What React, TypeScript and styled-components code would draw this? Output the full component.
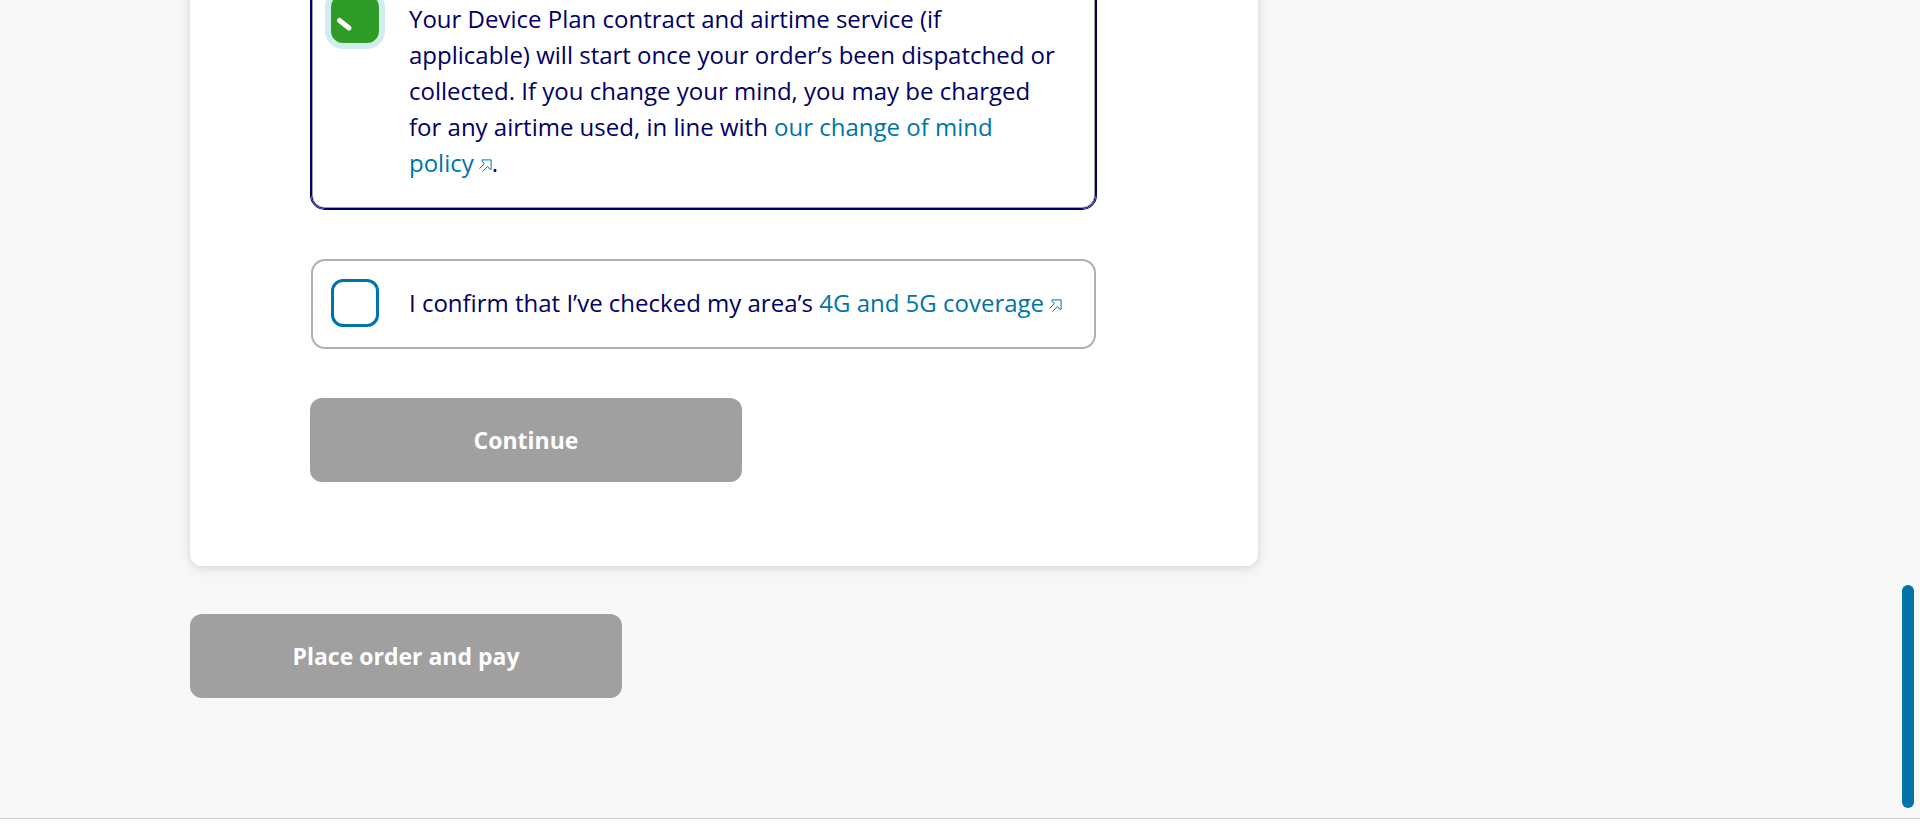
import React, { useState } from 'react';
import styled, { createGlobalStyle, css } from 'styled-components';

const colors = {
  navy: '#000066',
  link: '#0074a9',
  green: '#2f9c28',
  halo: '#d1eeef',
  grey: '#a0a0a0',
  page: '#f8f8f8',
  line: '#cccccc',
};

const GlobalStyle = createGlobalStyle`
  *, *::before, *::after { box-sizing: border-box; }
  body {
    margin: 0;
    background: #ffffff;
    color: ${colors.navy};
    font-family: "Open Sans", "Noto Sans", sans-serif;
    font-size: 24px;
    line-height: 36px;
  }
`;

const Viewport = styled.div`
  position: relative;
  min-height: 100vh;
  overflow: hidden;
`;

const Page = styled.main`
  background: ${colors.page};
  border-bottom: 1px solid ${colors.line};
  padding: 0 24px 120px;
`;

const Container = styled.div`
  max-width: 1540px;
  margin: 0 auto;
`;

const Column = styled.div`
  max-width: 1068px;
  display: flex;
  flex-direction: column;
  align-items: flex-start;
  gap: 48px;
`;

const Card = styled.form`
  width: 100%;
  margin-top: -109px;
  padding: 84px 161px 84px 120px;
  background: #ffffff;
  border-radius: 12px;
  box-shadow: 0 2px 8px rgba(0, 0, 0, 0.12), 0 4px 24px rgba(0, 0, 0, 0.04);
  display: flex;
  flex-direction: column;
  align-items: flex-start;
`;

const Options = styled.div`
  width: 100%;
  display: flex;
  flex-direction: column;
  gap: 50px;
  margin-bottom: 49px;
  padding: 0 1px;
`;

const Option = styled.div<{ $checked: boolean }>`
  display: grid;
  grid-template-columns: 48px 1fr;
  column-gap: 30px;
  padding: 24px 29px 26px 18px;
  border: 2px solid #b0b0b0;
  border-radius: 14px;
  ${p =>
    p.$checked &&
    css`
      border: 1px solid ${colors.navy};
      padding: 25px 30px 27px 19px;
      box-shadow: 0 0 0 1px ${colors.navy}, inset 0 0 0 1px ${colors.grey};
    `}
`;

const Tick = styled.span`
  display: grid;
  align-self: start;
  margin: -6px 0;

  > * {
    grid-area: 1 / 1;
  }
`;

const Checkbox = styled.input`
  appearance: none;
  width: 48px;
  height: 48px;
  margin: 0;
  border: 3px solid ${colors.link};
  border-radius: 12px;
  background: #ffffff;
  cursor: pointer;

  &:checked {
    border-color: ${colors.green};
    background: ${colors.green};
    box-shadow: 0 0 0 6px ${colors.halo};
  }
`;

const TickMark = styled.svg`
  width: 48px;
  height: 48px;
  pointer-events: none;
`;

const Link = styled.a`
  color: ${colors.link};
  text-decoration: none;
`;

const NoWrap = styled.span`
  white-space: nowrap;
`;

const Arrow = styled.svg`
  width: 13px;
  height: 13px;
  margin-left: 5px;
`;

const Button = styled.button`
  width: 432px;
  max-width: 100%;
  height: 84px;
  border: 0;
  border-radius: 12px;
  background: ${colors.grey};
  color: #ffffff;
  font: inherit;
  font-size: 23px;
  font-weight: 700;
`;

const ScrollThumb = styled.div`
  position: absolute;
  right: 6px;
  bottom: 31px;
  width: 12px;
  height: 223px;
  border-radius: 6px;
  background: ${colors.link};
`;

function ExternalArrow() {
  return (
    <Arrow viewBox="0 0 13 13" fill="none" stroke={colors.link} strokeWidth="1" aria-hidden="true">
      <path d="M0.5 9.5 L5.5 4.5 L3 2.5 L3 0.9 H12.1 V10.3 H10.8 L8.6 7.5 L3.6 12.5" />
    </Arrow>
  );
}

type ConfirmProps = { id: string; initial: boolean; children: React.ReactNode };

function Confirm({ id, initial, children }: ConfirmProps) {
  const [checked, setChecked] = useState(initial);
  return (
    <Option $checked={checked}>
      <Tick>
        <Checkbox type="checkbox" id={id} checked={checked} onChange={e => setChecked(e.target.checked)} />
        {checked && (
          <TickMark viewBox="0 0 48 48" aria-hidden="true">
            <path d="M8.5 25.5 L18 33" stroke="#ffffff" strokeWidth="5" strokeLinecap="round" />
          </TickMark>
        )}
      </Tick>
      <label htmlFor={id}>{children}</label>
    </Option>
  );
}

export default function App() {
  return (
    <Viewport>
      <GlobalStyle />
      <Page>
        <Container>
          <Column>
            <Card>
              <Options>
                <Confirm id="contract" initial>
                  Your Device Plan contract and airtime service (if applicable) will start once your order’s been
                  dispatched or collected. If you change your mind, you may be charged for any airtime used, in line
                  with{' '}
                  <Link href="#change-of-mind">
                    our change of mind <NoWrap>policy<ExternalArrow /></NoWrap>
                  </Link>
                  .
                </Confirm>
                <Confirm id="coverage" initial={false}>
                  I confirm that I’ve checked my area’s{' '}
                  <Link href="#coverage-map">
                    4G and 5G <NoWrap>coverage<ExternalArrow /></NoWrap>
                  </Link>
                </Confirm>
              </Options>
              <Button type="button" disabled>Continue</Button>
            </Card>
            <Button type="button" disabled>Place order and pay</Button>
          </Column>
        </Container>
      </Page>
      <ScrollThumb />
    </Viewport>
  );
}
